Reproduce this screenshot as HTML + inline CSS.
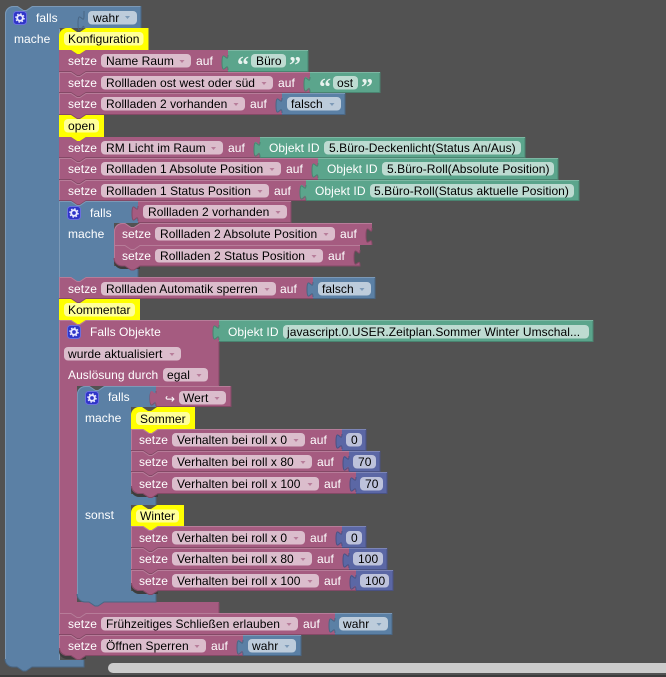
<!DOCTYPE html>
<html><head><meta charset="utf-8"><style>
html,body{margin:0;padding:0;background:#525252;width:666px;height:677px;overflow:hidden}
svg{display:block;position:absolute;left:0;top:0}
text{font-family:"Liberation Sans",Arial,sans-serif;font-size:12px;fill:#000;white-space:pre;letter-spacing:.06px;text-rendering:optimizeLegibility}
.w{fill:#fff}
.q{font-family:"Liberation Serif",serif;font-size:24px;font-weight:bold;fill:#e8f3ef}
.m{fill:#a55b80}.ml,.md,.bl,.bd,.gl,.gd,.pl,.pd,.yl,.yd{fill:none;stroke-width:1}
.ml{stroke:#b77c99}.md{stroke:#844966}
.b{fill:#5b80a5}.bl{stroke:#7c99b7}.bd{stroke:#496684}
.g{fill:#5ba58c}.gl{stroke:#7cb7a3}.gd{stroke:#498470}
.p{fill:#5b67a5}.pl{stroke:#7c85b7}.pd{stroke:#495284}
.y{fill:#ff0}.yl{stroke:#ffff66}.yd{stroke:#cccc00}
.fm{fill:#dbbdcc}.fb{fill:#bdccdb}.fg{fill:#bddbd1}.fp{fill:#bdc2db}.fy{fill:#ffff99}
.am{fill:#a55b80;opacity:.65}.ab{fill:#5b80a5;opacity:.65}
.gi{fill:#2f35c8;stroke:#6a6ee0;stroke-width:1}
</style></head><body>
<svg width="666" height="677" viewBox="0 0 666 677" xmlns="http://www.w3.org/2000/svg">
<defs>
<g id="gear"><rect x=".5" y=".5" width="13" height="13" rx="3" class="gi"/><circle cx="7" cy="7" r="2.8" fill="none" stroke="#e8e8ff" stroke-width="1.9"/><circle cx="7" cy="7" r="4.2" fill="none" stroke="#e8e8ff" stroke-width="1.2" stroke-dasharray="1.6 1.7"/></g>
</defs>
<rect x="0" y="675" width="666" height="2" fill="#3c3c3c"/>
<!-- outer blue -->
<path class="b" d="M13 6h4l6 4h3l6-4H141V28H59V660H84V667H32l-6 4h-3l-6-4H13a8 8 0 0 1-8-8V14a8 8 0 0 1 8-8Z"/>
<path class="bl" d="M5.500 659V14a8 8 0 0 1 8-7.500h4l6 4h3l6-4H141M59.500 28.500V660"/>
<path class="bd" d="M141 6V28M84 660V667H32l-6 4h-3l-6-4H13a8 8 0 0 1-8-8"/>
<path class="bd" d="M84 11v5c0 10-6-8-6 7.500s6-2.500 6 4.500"/>
<use href="#gear" x="13" y="11"/>
<text x="36" y="22" class="w">falls</text>
<rect x="88" y="11" width="49" height="13.500" rx="4" class="fb"/><text x="93" y="22">wahr</text><path class="ab" d="M125 16h5l-2.500 3z"/>
<text x="14" y="43" class="w">mache</text>

<!-- Konfiguration -->
<path class="y" d="M67 28h4l6 4h3l6-4H148.500V50H86l-6 4h-3l-6-4H59V36a8 8 0 0 1 8-8Z"/>
<rect x="64" y="32" width="79.500" height="13.500" rx="4" class="fy"/><text x="68" y="43">Konfiguration</text>

<!-- Row: Name Raum -->
<path class="m" d="M59 50h12l6 4h3l6-4H228V72H86l-6 4h-3l-6-4H59Z"/><path class="md" d="M228 71.500H86l-6 4h-3l-6-4H59"/>
<text x="68" y="65" class="w">setze</text><rect x="101" y="54" width="90" height="13.500" rx="4" class="fm"/><text x="106" y="65">Name Raum</text><path class="am" d="M179.500 60h5l-2.500 3z"/><text x="196" y="65" class="w">auf</text>
<path class="g" d="M228 50H308V72H228V70c0-10-6 8-6-7.500s6 2.500 6-7.500Z"/><path class="gd" d="M308 50V71.500H228M228 55c0 10-6-8-6 7.500s6-2.500 6 7.500"/><path class="gl" d="M228 50.500H308"/>
<text class="q" x="237" y="73">“</text><rect x="251" y="54" width="35" height="13.500" rx="4" class="fg"/><text x="256" y="65">Büro</text><text class="q" x="289" y="73">”</text>

<!-- Row 2 -->
<path class="m" d="M59 72h12l6 4h3l6-4H310V93H86l-6 4h-3l-6-4H59Z"/><path class="ml" d="M59.500 93V72.500H71l6 4h3l6-4H310"/><path class="md" d="M310 92.500H86l-6 4h-3l-6-4H59"/>
<text x="68" y="87" class="w">setze</text><rect x="101" y="76" width="172" height="13.500" rx="4" class="fm"/><text x="106" y="87">Rollladen ost west oder süd</text><path class="am" d="M261.500 82h5l-2.500 3z"/><text x="278" y="87" class="w">auf</text>
<path class="g" d="M310 72H380V93H310V91c0-10-6 8-6-7.500s6 2.500 6-7.500Z"/><path class="gd" d="M380 72V92.500H310M310 77c0 10-6-8-6 7.500s6-2.500 6 7.500"/><path class="gl" d="M310 72.500H380"/>
<text class="q" x="319" y="95">“</text><rect x="333" y="76" width="25" height="13.500" rx="4" class="fg"/><text x="337" y="87">ost</text><text class="q" x="361" y="95">”</text>

<!-- Row 3 -->
<path class="m" d="M59 93h12l6 4h3l6-4H282V115H86l-6 4h-3l-6-4H59Z"/><path class="ml" d="M59.500 115V93.500H71l6 4h3l6-4H282"/><path class="md" d="M282 114.500H86l-6 4h-3l-6-4H59"/>
<text x="68" y="108" class="w">setze</text><rect x="101" y="97" width="144" height="13.500" rx="4" class="fm"/><text x="106" y="108">Rollladen 2 vorhanden</text><path class="am" d="M233.500 103h5l-2.500 3z"/><text x="250" y="108" class="w">auf</text>
<path class="b" d="M282 93H345V115H282V113c0-10-6 8-6-7.500s6 2.500 6-7.500Z"/><path class="bd" d="M345 93V114.500H282M282 98c0 10-6-8-6 7.500s6-2.500 6 7.500"/><path class="bl" d="M282 93.500H345"/>
<rect x="287" y="97" width="54" height="13.500" rx="4" class="fb"/><text x="291" y="108">falsch</text><path class="ab" d="M329.500 103h5l-2.500 3z"/>

<!-- open -->
<path class="y" d="M59 115h12l6 4h3l6-4H104V137H86l-6 4h-3l-6-4H59Z"/>
<rect x="64" y="119" width="35" height="13.500" rx="4" class="fy"/><text x="68" y="130">open</text>

<!-- RM Licht -->
<path class="m" d="M59 137h12l6 4h3l6-4H260V158H86l-6 4h-3l-6-4H59Z"/><path class="md" d="M260 157.500H86l-6 4h-3l-6-4H59"/>
<text x="68" y="152" class="w">setze</text><rect x="101" y="141" width="122" height="13.500" rx="4" class="fm"/><text x="106" y="152">RM Licht im Raum</text><path class="am" d="M211 147h5l-2.500 3z"/><text x="228" y="152" class="w">auf</text>
<path class="g" d="M260 137H525V158H260V156c0-10-6 8-6-7.500s6 2.500 6-7.500Z"/><path class="gd" d="M525 137V157.500H260M260 142c0 10-6-8-6 7.500s6-2.500 6 7.500"/><path class="gl" d="M260 137.500H525"/>
<text x="269" y="152" class="w">Objekt ID</text><rect x="324" y="141" width="197" height="13.500" rx="4" class="fg"/><text x="329" y="152">5.Büro-Deckenlicht(Status An/Aus)</text>

<!-- R1 Abs -->
<path class="m" d="M59 158h12l6 4h3l6-4H318V180H86l-6 4h-3l-6-4H59Z"/><path class="ml" d="M59.500 180V158.500H71l6 4h3l6-4H318"/><path class="md" d="M318 179.500H86l-6 4h-3l-6-4H59"/>
<text x="68" y="173" class="w">setze</text><rect x="101" y="162" width="180" height="13.500" rx="4" class="fm"/><text x="106" y="173">Rollladen 1 Absolute Position</text><path class="am" d="M269.500 168h5l-2.500 3z"/><text x="286" y="173" class="w">auf</text>
<path class="g" d="M318 158H558V180H318V178c0-10-6 8-6-7.500s6 2.500 6-7.500Z"/><path class="gd" d="M558 158V179.500H318M318 163c0 10-6-8-6 7.500s6-2.500 6 7.500"/><path class="gl" d="M318 158.500H558"/>
<text x="327" y="173" class="w">Objekt ID</text><rect x="382" y="162" width="172" height="13.500" rx="4" class="fg"/><text x="387" y="173">5.Büro-Roll(Absolute Position)</text>

<!-- R1 Stat -->
<path class="m" d="M59 180h12l6 4h3l6-4H306V201H86l-6 4h-3l-6-4H59Z"/><path class="ml" d="M59.500 201V180.500H71l6 4h3l6-4H306"/><path class="md" d="M306 200.500H86l-6 4h-3l-6-4H59"/>
<text x="68" y="195" class="w">setze</text><rect x="101" y="184" width="168" height="13.500" rx="4" class="fm"/><text x="106" y="195">Rollladen 1 Status Position</text><path class="am" d="M257.500 190h5l-2.500 3z"/><text x="274" y="195" class="w">auf</text>
<path class="g" d="M306 180H579V201H306V199c0-10-6 8-6-7.500s6 2.500 6-7.500Z"/><path class="gd" d="M579 180V200.500H306M306 185c0 10-6-8-6 7.500s6-2.500 6 7.500"/><path class="gl" d="M306 180.500H579"/>
<text x="315" y="195" class="w">Objekt ID</text><rect x="370" y="184" width="204" height="13.500" rx="4" class="fg"/><text x="374" y="195">5.Büro-Roll(Status aktuelle Position)</text>

<!-- inner falls 1 -->
<path class="b" d="M59 201h12l6 4h3l6-4H138V223H114V266H138V277H86l-6 4h-3l-6-4H59Z"/>
<path class="bl" d="M59.500 277V201.500H71l6 4h3l6-4H138"/><path class="bd" d="M138 266V277"/>
<use href="#gear" x="67" y="206"/><text x="90" y="217" class="w">falls</text><text x="68" y="238" class="w">mache</text>
<path class="m" d="M138 201H291V223H138V221c0-10-6 8-6-7.500s6 2.500 6-7.500Z"/><path class="md" d="M291 201V222.500H138M138 206c0 10-6-8-6 7.500s6-2.500 6 7.500"/><path class="ml" d="M138 201.500H291"/>
<rect x="143" y="205" width="144" height="13.500" rx="4" class="fm"/><text x="148" y="216">Rollladen 2 vorhanden</text><path class="am" d="M275.500 211h5l-2.500 3z"/>

<!-- inner rows -->
<path class="m" d="M122 223h3l6 4h3l6-4H372v5c0 10-6-8-6 7.500s6-2.500 6 9.500H140l-6 4h-3l-6-4H114V231a8 8 0 0 1 8-8Z"/><path class="md" d="M372 228c0 10-6-8-6 7.500s6-2.500 6 9.500"/><path class="ml" d="M114.500 245V231a8 8 0 0 1 8-7.500H125l6 4h3l6-4H372"/>
<text x="122" y="238" class="w">setze</text><rect x="155" y="227" width="180" height="13.500" rx="4" class="fm"/><text x="160" y="238">Rollladen 2 Absolute Position</text><path class="am" d="M323.500 233h5l-2.500 3z"/><text x="340" y="238" class="w">auf</text>
<path fill="#3d3d3d" d="M114 258v3a8 8 0 0 0 8 8H140v-3z"/>
<path class="m" d="M114 245h11l6 4h3l6-4H360v5c0 10-6-8-6 7.500s6-2.500 6 8.500H140l-6 4h-3l-6-4H122a8 8 0 0 1-8-8Z"/><path class="md" d="M360 250c0 10-6-8-6 7.500s6-2.500 6 8.500H140l-6 4h-3l-6-4H122a8 8 0 0 1-8-8"/><path class="ml" d="M114.500 258V245.500H125l6 4h3l6-4H360"/>
<text x="122" y="260" class="w">setze</text><rect x="155" y="249" width="168" height="13.500" rx="4" class="fm"/><text x="160" y="260">Rollladen 2 Status Position</text><path class="am" d="M311.500 255h5l-2.500 3z"/><text x="328" y="260" class="w">auf</text>

<!-- Automatik -->
<path class="m" d="M59 277h12l6 4h3l6-4H313V299H86l-6 4h-3l-6-4H59Z"/><path class="ml" d="M59.500 299V277.500H71l6 4h3l6-4H313"/><path class="md" d="M313 298.500H86l-6 4h-3l-6-4H59"/>
<text x="68" y="293" class="w">setze</text><rect x="101" y="282" width="175" height="13.500" rx="4" class="fm"/><text x="106" y="293">Rollladen Automatik sperren</text><path class="am" d="M264.500 288h5l-2.500 3z"/><text x="280" y="293" class="w">auf</text>
<path class="b" d="M313 277H375V299H313V297c0-10-6 8-6-7.500s6 2.500 6-7.500Z"/><path class="bd" d="M375 277V298.500H313M313 282c0 10-6-8-6 7.500s6-2.500 6 7.500"/><path class="bl" d="M313 277.500H375"/>
<rect x="318" y="282" width="53" height="13.500" rx="4" class="fb"/><text x="322" y="293">falsch</text><path class="ab" d="M359.500 288h5l-2.500 3z"/>

<!-- Kommentar -->
<path class="y" d="M59 299h12l6 4h3l6-4H140V320H86l-6 4h-3l-6-4H59Z"/>
<rect x="64" y="303" width="71" height="13.500" rx="4" class="fy"/><text x="68" y="314">Kommentar</text>

<!-- Falls Objekte -->
<path class="m" d="M59 320h12l6 4h3l6-4H219V386H231V407H156V386H77V602H219V613H86l-6 4h-3l-6-4H59Z"/>
<path class="ml" d="M59.500 613V320.500H71l6 4h3l6-4H219"/><path class="md" d="M219 342V385.500M219 602.500V613"/>
<use href="#gear" x="67" y="325"/><text x="90" y="336" class="w">Falls Objekte</text>
<path class="g" d="M219 320H593V342H219V340c0-10-6 8-6-7.500s6 2.500 6-7.500Z"/><path class="gd" d="M593 320V341.500H219M219 325c0 10-6-8-6 7.500s6-2.500 6 7.500"/><path class="gl" d="M219 320.500H593"/>
<text x="228" y="336" class="w">Objekt ID</text><rect x="283" y="325" width="306" height="13.500" rx="4" class="fg"/><text x="287" y="336">javascript.0.USER.Zeitplan.Sommer Winter Umschal...</text>
<rect x="64" y="347" width="117" height="13.500" rx="4" class="fm"/><text x="68" y="358">wurde aktualisiert</text><path class="am" d="M169.500 353h5l-2.500 3z"/>
<text x="68" y="379" class="w">Auslösung durch</text><rect x="163" y="368" width="45" height="13.500" rx="4" class="fm"/><text x="167" y="379">egal</text><path class="am" d="M196.500 374h5l-2.500 3z"/>

<!-- inner falls 2 -->
<path class="b" d="M85 386h4l6 4h3l6-4H156V407H131V494H156V505H131V591H156V602H104l-6 4h-3l-6-4H85a8 8 0 0 1-8-8V394a8 8 0 0 1 8-8Z"/>
<path class="bl" d="M77.500 594V394a8 8 0 0 1 8-7.500h4l6 4h3l6-4H156"/><path class="bd" d="M156 494V505M156 591V602H104l-6 4h-3l-6-4H85a8 8 0 0 1-8-8"/>
<use href="#gear" x="85" y="391"/><text x="108" y="401" class="w">falls</text><text x="85" y="422" class="w">mache</text><text x="85" y="519" class="w">sonst</text>
<path class="ml" d="M156 386.500H231"/><path class="md" d="M231 386V406.500H156M156 391c0 10-6-8-6 7.500s6-2.500 6 7.500"/>
<path class="m" d="M156 386V405c0-10-6 8-6-7.500s6 2.500 6-7.500Z"/>
<text x="165" y="403" style="fill:#fff;font-size:12px;font-family:'DejaVu Sans',sans-serif">↪</text>
<rect x="179" y="391" width="47" height="13.500" rx="4" class="fm"/><text x="183" y="402">Wert</text><path class="am" d="M214.500 397h5l-2.500 3z"/>

<!-- Sommer -->
<path class="y" d="M139 407h3l6 4h3l6-4H195V429H158l-6 4h-3l-6-4H131V415a8 8 0 0 1 8-8Z"/>
<rect x="136" y="412" width="54" height="13" rx="4" class="fy"/><text x="140" y="423">Sommer</text>

<path class="m" d="M131 429h12l6 4h3l6-4H342V451H158l-6 4h-3l-6-4H131Z"/><path class="ml" d="M131.500 451V429.500H143l6 4h3l6-4H342"/><path class="md" d="M342 450.500H158l-6 4h-3l-6-4H131"/>
<text x="139" y="444" class="w">setze</text><rect x="172" y="433" width="133" height="13.500" rx="4" class="fm"/><text x="177" y="444">Verhalten bei roll x 0</text><path class="am" d="M293.500 439h5l-2.500 3z"/><text x="310" y="444" class="w">auf</text>
<path class="p" d="M342 429H366V451H342V449c0-10-6 8-6-7.500s6 2.500 6-7.500Z"/><path class="pd" d="M366 429V450.500H342M342 434c0 10-6-8-6 7.500s6-2.500 6 7.500"/><path class="pl" d="M342 429.500H366"/>
<rect x="346" y="433" width="16" height="13.500" rx="4" class="fp"/><text x="351" y="444">0</text>

<path class="m" d="M131 451h12l6 4h3l6-4H349V472H158l-6 4h-3l-6-4H131Z"/><path class="ml" d="M131.500 472V451.500H143l6 4h3l6-4H349"/><path class="md" d="M349 471.500H158l-6 4h-3l-6-4H131"/>
<text x="139" y="466" class="w">setze</text><rect x="172" y="455" width="140" height="13.500" rx="4" class="fm"/><text x="177" y="466">Verhalten bei roll x 80</text><path class="am" d="M300.500 461h5l-2.500 3z"/><text x="317" y="466" class="w">auf</text>
<path class="p" d="M349 451H380V472H349V470c0-10-6 8-6-7.500s6 2.500 6-7.500Z"/><path class="pd" d="M380 451V471.500H349M349 456c0 10-6-8-6 7.500s6-2.500 6 7.500"/><path class="pl" d="M349 451.500H380"/>
<rect x="353" y="455" width="23" height="13.500" rx="4" class="fp"/><text x="358" y="466">70</text>

<path fill="#3d3d3d" d="M131 486v3a8 8 0 0 0 8 8H158v-3z"/>
<path class="m" d="M131 472h12l6 4h3l6-4H356V494H158l-6 4h-3l-6-4H139a8 8 0 0 1-8-8Z"/><path class="ml" d="M131.500 486V472.500H143l6 4h3l6-4H356"/><path class="md" d="M356 493.500H158l-6 4h-3l-6-4H139a8 8 0 0 1-7.500-7.500"/>
<text x="139" y="488" class="w">setze</text><rect x="172" y="477" width="147" height="13.500" rx="4" class="fm"/><text x="177" y="488">Verhalten bei roll x 100</text><path class="am" d="M307.500 483h5l-2.500 3z"/><text x="324" y="488" class="w">auf</text>
<path class="p" d="M356 472H387V494H356V492c0-10-6 8-6-7.500s6 2.500 6-7.500Z"/><path class="pd" d="M387 472V493.500H356M356 477c0 10-6-8-6 7.500s6-2.500 6 7.500"/><path class="pl" d="M356 472.500H387"/>
<rect x="360" y="477" width="23" height="13.500" rx="4" class="fp"/><text x="365" y="488">70</text>

<!-- Winter -->
<path class="y" d="M139 505h3l6 4h3l6-4H184V526H158l-6 4h-3l-6-4H131V513a8 8 0 0 1 8-8Z"/>
<rect x="136" y="509.500" width="43" height="13" rx="4" class="fy"/><text x="140" y="520">Winter</text>

<path class="m" d="M131 526h12l6 4h3l6-4H342V548H158l-6 4h-3l-6-4H131Z"/><path class="ml" d="M131.500 548V526.500H143l6 4h3l6-4H342"/><path class="md" d="M342 547.500H158l-6 4h-3l-6-4H131"/>
<text x="139" y="542" class="w">setze</text><rect x="172" y="531" width="133" height="13.500" rx="4" class="fm"/><text x="177" y="542">Verhalten bei roll x 0</text><path class="am" d="M293.500 537h5l-2.500 3z"/><text x="310" y="542" class="w">auf</text>
<path class="p" d="M342 526H366V548H342V546c0-10-6 8-6-7.500s6 2.500 6-7.500Z"/><path class="pd" d="M366 526V547.500H342M342 531c0 10-6-8-6 7.500s6-2.500 6 7.500"/><path class="pl" d="M342 526.500H366"/>
<rect x="346" y="531" width="16" height="13.500" rx="4" class="fp"/><text x="351" y="542">0</text>

<path class="m" d="M131 548h12l6 4h3l6-4H349V570H158l-6 4h-3l-6-4H131Z"/><path class="ml" d="M131.500 570V548.500H143l6 4h3l6-4H349"/><path class="md" d="M349 569.500H158l-6 4h-3l-6-4H131"/>
<text x="139" y="563" class="w">setze</text><rect x="172" y="552" width="140" height="13.500" rx="4" class="fm"/><text x="177" y="563">Verhalten bei roll x 80</text><path class="am" d="M300.500 558h5l-2.500 3z"/><text x="317" y="563" class="w">auf</text>
<path class="p" d="M349 548H387V570H349V568c0-10-6 8-6-7.500s6 2.500 6-7.500Z"/><path class="pd" d="M387 548V569.500H349M349 553c0 10-6-8-6 7.500s6-2.500 6 7.500"/><path class="pl" d="M349 548.500H387"/>
<rect x="353" y="552" width="30" height="13.500" rx="4" class="fp"/><text x="358" y="563">100</text>

<path fill="#3d3d3d" d="M131 583v3a8 8 0 0 0 8 8H158v-3z"/>
<path class="m" d="M131 570h12l6 4h3l6-4H356V591H158l-6 4h-3l-6-4H139a8 8 0 0 1-8-8Z"/><path class="ml" d="M131.500 583V570.500H143l6 4h3l6-4H356"/><path class="md" d="M356 590.500H158l-6 4h-3l-6-4H139a8 8 0 0 1-7.500-7.500"/>
<text x="139" y="585" class="w">setze</text><rect x="172" y="574" width="147" height="13.500" rx="4" class="fm"/><text x="177" y="585">Verhalten bei roll x 100</text><path class="am" d="M307.500 580h5l-2.500 3z"/><text x="324" y="585" class="w">auf</text>
<path class="p" d="M356 570H393V591H356V589c0-10-6 8-6-7.500s6 2.500 6-7.500Z"/><path class="pd" d="M393 570V590.500H356M356 575c0 10-6-8-6 7.500s6-2.500 6 7.500"/><path class="pl" d="M356 570.500H393"/>
<rect x="360" y="574" width="29" height="13.500" rx="4" class="fp"/><text x="365" y="585">100</text>

<!-- Frühzeitig -->
<path class="m" d="M59 613h12l6 4h3l6-4H335V635H86l-6 4h-3l-6-4H59Z"/><path class="ml" d="M59.500 635V613.500H71l6 4h3l6-4H335"/><path class="md" d="M335 634.500H86l-6 4h-3l-6-4H59"/>
<text x="68" y="628" class="w">setze</text><rect x="101" y="617" width="197" height="13.500" rx="4" class="fm"/><text x="106" y="628">Frühzeitiges Schließen erlauben</text><path class="am" d="M286.500 623h5l-2.500 3z"/><text x="303" y="628" class="w">auf</text>
<path class="b" d="M335 613H392V635H335V633c0-10-6 8-6-7.500s6 2.500 6-7.500Z"/><path class="bd" d="M392 613V634.500H335M335 618c0 10-6-8-6 7.500s6-2.500 6 7.500"/><path class="bl" d="M335 613.500H392"/>
<rect x="339" y="617" width="49" height="13.500" rx="4" class="fb"/><text x="343" y="628">wahr</text><path class="ab" d="M376.500 623h5l-2.500 3z"/>

<!-- Öffnen -->
<path fill="#3d3d3d" d="M59 648v3a8 8 0 0 0 8 8H86v-3z"/>
<path class="m" d="M59 635h12l6 4h3l6-4H243V656H86l-6 4h-3l-6-4H67a8 8 0 0 1-8-8Z"/><path class="ml" d="M59.500 648V635.500H71l6 4h3l6-4H243"/><path class="md" d="M243 655.500H86l-6 4h-3l-6-4H67a8 8 0 0 1-7.500-7.500"/>
<text x="68" y="650" class="w">setze</text><rect x="101" y="639" width="105" height="13.500" rx="4" class="fm"/><text x="106" y="650">Öffnen Sperren</text><path class="am" d="M194.500 645h5l-2.500 3z"/><text x="211" y="650" class="w">auf</text>
<path class="b" d="M243 635H301V656H243V654c0-10-6 8-6-7.500s6 2.500 6-7.500Z"/><path class="bd" d="M301 635V655.500H243M243 640c0 10-6-8-6 7.500s6-2.500 6 7.500"/><path class="bl" d="M243 635.500H301"/>
<rect x="248" y="639" width="48" height="13.500" rx="4" class="fb"/><text x="252" y="650">wahr</text><path class="ab" d="M284.500 645h5l-2.500 3z"/>

<!-- scrollbar -->
<path fill="#cccccc" d="M113 663H666V673H113a5 5 0 0 1 0-10Z"/>
</svg>
</body></html>
